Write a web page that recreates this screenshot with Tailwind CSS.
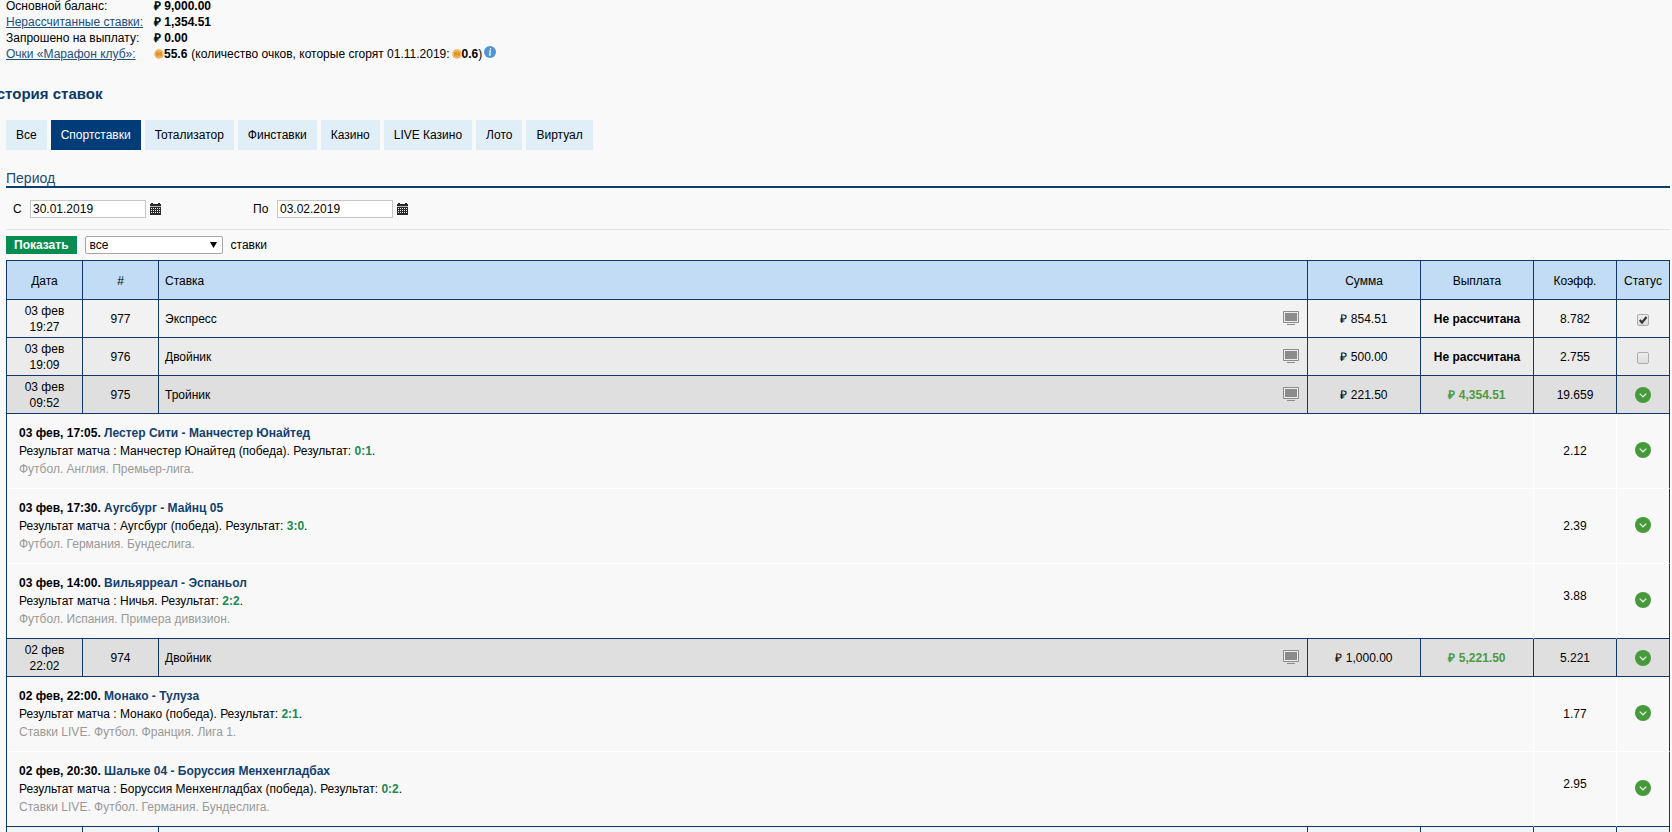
<!DOCTYPE html>
<html lang="ru">
<head>
<meta charset="utf-8">
<title>История ставок</title>
<script src="https://cdn.jsdelivr.net/npm/@tailwindcss/browser@4"></script>
</head>
<body class="bg-[#f9f9f9] font-['Liberation_Sans',Arial,sans-serif] text-[12px] leading-4 text-black">
<svg class="hidden" aria-hidden="true">
  <symbol id="monitor" viewBox="0 0 16 14"><path d="M.5.5h15v11H.5z" fill="#ededed" stroke="#8b8b8b"/><path d="M2 2h12v8H2zM4 13h8v1H4z" fill="#8b8b8b"/></symbol>
  <symbol id="won" viewBox="0 0 16 16"><circle cx="8" cy="8" r="8" fill="#479a3b"/><path d="M4.700 6.600l3.300 3.200 3.300-3.200" fill="none" stroke="#e8f6e4" stroke-width="1.200"/></symbol>
  <symbol id="calendar" viewBox="0 0 11 12"><path d="M0 1h1V0h2v1h5V0h2v1h1v2H0zM0 4h11v8H0z" fill="#2b2b2b"/><path d="M0 3.500h11" stroke="#bdbdbd"/><path d="M1 5.500h9M1 7.500h9M1 9.500h9" stroke="#f0f0f0" stroke-dasharray="1 1"/></symbol>
  <symbol id="coin" viewBox="0 0 10 10"><circle cx="5" cy="5" r="4.700" fill="#eba53a"/><circle cx="5" cy="5" r="3.700" fill="none" stroke="#f6d196" stroke-width=".6"/><path d="M3 6.800V3.600l2 2 2-2v3.200" fill="none" stroke="#c98122" stroke-width=".9"/></symbol>
</svg>
<main class="pl-1.5 pr-0.5">
  <dl class="-mt-0.5 grid grid-cols-[148px_1fr]">
    <dt>Основной баланс:</dt><dd class="font-bold">₽ 9,000.00</dd>
    <dt><a href="#" class="text-[#1c4f7c] underline">Нерассчитанные ставки:</a></dt><dd class="font-bold">₽ 1,354.51</dd>
    <dt>Запрошено на выплату:</dt><dd class="font-bold">₽ 0.00</dd>
    <dt><a href="#" class="text-[#1c4f7c] underline">Очки «Марафон клуб»:</a></dt>
    <dd class="flex items-center"><svg class="size-2.5"><use href="#coin"/></svg><b>55.6</b><span class="ml-1">(количество очков, которые сгорят 01.11.2019:</span><svg class="ml-0.5 size-2.5"><use href="#coin"/></svg><b>0.6</b>)<button aria-label="Информация" class="ml-0.5 pb-1"><svg class="block size-3" viewBox="0 0 12 12"><circle cx="6" cy="6" r="6" fill="#5295d5"/><path d="M6.600 2.200l-.2 1.400M5 5h1.300L5.600 9h1.300" fill="none" stroke="#fff" stroke-width="1.200"/></svg></button></dd>
  </dl>

  <h1 class="-ml-5 mt-[22px] text-[15px] leading-5 font-bold text-[#0d3a68]">История ставок</h1>

  <nav class="mt-4 flex gap-1">
    <button class="h-[30px] bg-[#e0eef8] px-2.5">Все</button>
    <button class="h-[30px] bg-[#003d78] px-2.5 text-white">Спортставки</button>
    <button class="h-[30px] bg-[#e0eef8] px-2.5">Тотализатор</button>
    <button class="h-[30px] bg-[#e0eef8] px-2.5">Финставки</button>
    <button class="h-[30px] bg-[#e0eef8] px-2.5">Казино</button>
    <button class="h-[30px] bg-[#e0eef8] px-2.5">LIVE Казино</button>
    <button class="h-[30px] bg-[#e0eef8] px-2.5">Лото</button>
    <button class="h-[30px] bg-[#e0eef8] px-2.5">Виртуал</button>
  </nav>

  <h2 class="mt-5 border-b-2 border-[#0c3d6b] text-[14px] leading-4 text-[#1c4a78]">Период</h2>
  <form>
    <div class="flex items-center border-b border-[#e4e4e4] pt-3 pb-[11px] pl-[7px]">
      <label for="from" class="w-[17px]">С</label>
      <input id="from" value="30.01.2019" class="h-[18px] w-[116px] border border-[#c6c6c6] bg-white px-0.5">
      <button type="button" aria-label="Выбрать дату начала" class="ml-1"><svg class="block h-3 w-[11px]"><use href="#calendar"/></svg></button>
      <label for="to" class="ml-[92px] w-6">По</label>
      <input id="to" value="03.02.2019" class="h-[18px] w-[116px] border border-[#c6c6c6] bg-white px-0.5">
      <button type="button" aria-label="Выбрать дату окончания" class="ml-1"><svg class="block h-3 w-[11px]"><use href="#calendar"/></svg></button>
    </div>
    <div class="flex items-center py-1.5">
      <button type="button" class="h-[18px] bg-[#078d50] px-2 font-bold text-white">Показать</button>
      <div class="relative ml-2">
        <select id="kind" class="block h-[18px] w-[138px] appearance-none rounded-xs border border-[#a6a6a6] bg-white px-1 leading-4"><option>все</option></select>
        <svg class="pointer-events-none absolute top-1.5 right-1.5 h-1.5 w-[7px]" viewBox="0 0 7 6"><path d="M0 0h7L3.500 6z"/></svg>
      </div>
      <label for="kind" class="ml-2">ставки</label>
    </div>
  </form>

  <table class="w-full table-fixed border-separate border-spacing-0 border-t border-l border-[#12386a] text-center [&_th]:border-r [&_th]:border-b [&_th]:border-[#12386a] [&_th]:px-0 [&_th]:pt-0.5 [&_th]:pb-0 [&_th]:font-normal [&_td]:border-r [&_td]:border-b [&_td]:p-0 [&_svg]:inline-block [&_svg]:align-middle">
    <colgroup><col class="w-[76px]"><col class="w-[76px]"><col><col class="w-[113px]"><col class="w-[113px]"><col class="w-[83px]"><col class="w-[53px]"></colgroup>
    <thead>
      <tr class="h-[39px] bg-[#c1dcf4]"><th>Дата</th><th>#</th><th><div class="pl-1.5 text-left">Ставка</div></th><th>Сумма</th><th>Выплата</th><th>Коэфф.</th><th>Статус</th></tr>
    </thead>
    <tbody>
      <tr class="h-[38px] bg-[#f2f2f2] [&>td]:border-[#12386a] [&>td]:pt-px!">
        <td>03 фев<br>19:27</td><td>977</td><td><div class="flex justify-between pr-2 pl-1.5">Экспресс<svg class="h-3.5 w-4"><use href="#monitor"/></svg></div></td><td>₽ 854.51</td><td class="font-bold">Не рассчитана</td><td>8.782</td>
        <td><span class="relative inline-block size-3 align-middle"><input type="checkbox" checked aria-label="Ставка 977" class="peer block size-3 appearance-none rounded-xs border border-[#adadad] bg-linear-to-b from-[#eeeeee] to-[#dddddd]"><svg class="pointer-events-none absolute inset-0 hidden size-3 peer-checked:block" viewBox="0 0 12 12"><path d="M2.800 6l2.200 2.600L9.500 3" fill="none" stroke="#333" stroke-width="2.200"/></svg></span></td>
      </tr>
      <tr class="h-[38px] bg-[#ebebeb] [&>td]:border-[#12386a] [&>td]:pt-px!">
        <td>03 фев<br>19:09</td><td>976</td><td><div class="flex justify-between pr-2 pl-1.5">Двойник<svg class="h-3.5 w-4"><use href="#monitor"/></svg></div></td><td>₽ 500.00</td><td class="font-bold">Не рассчитана</td><td>2.755</td>
        <td><input type="checkbox" aria-label="Ставка 976" class="inline-block size-3 appearance-none rounded-xs border border-[#adadad] bg-linear-to-b from-[#eeeeee] to-[#dddddd] align-middle"></td>
      </tr>
      <tr class="h-[38px] bg-[#dfdfdf] [&>td]:border-[#12386a] [&>td]:pt-px!">
        <td>03 фев<br>09:52</td><td>975</td><td><div class="flex justify-between pr-2 pl-1.5">Тройник<svg class="h-3.5 w-4"><use href="#monitor"/></svg></div></td><td>₽ 221.50</td><td class="font-bold text-[#4d9a3f]">₽ 4,354.51</td><td>19.659</td><td><svg class="size-4"><use href="#won"/></svg></td>
      </tr>
      <tr class="h-[75px] bg-[#f8f8f8] [&>td]:border-white">
        <td colspan="5"><div class="pl-3 text-left leading-[18px]"><b>03 фев, 17:05. <span class="text-[#12406f]">Лестер Сити - Манчестер Юнайтед</span></b><p>Результат матча : Манчестер Юнайтед (победа). Результат: <b class="text-[#1c8a50]">0:1</b>.</p><p class="text-[#999999]">Футбол. Англия. Премьер-лига.</p></div></td>
        <td>2.12</td><td class="border-r-[#12386a]! pb-0.5!"><svg class="size-4"><use href="#won"/></svg></td>
      </tr>
      <tr class="h-[75px] bg-[#f8f8f8] [&>td]:border-white">
        <td colspan="5"><div class="pl-3 text-left leading-[18px]"><b>03 фев, 17:30. <span class="text-[#12406f]">Аугсбург - Майнц 05</span></b><p>Результат матча : Аугсбург (победа). Результат: <b class="text-[#1c8a50]">3:0</b>.</p><p class="text-[#999999]">Футбол. Германия. Бундеслига.</p></div></td>
        <td>2.39</td><td class="border-r-[#12386a]! pb-0.5!"><svg class="size-4"><use href="#won"/></svg></td>
      </tr>
      <tr class="h-[75px] bg-[#f8f8f8] [&>td]:border-r-white [&>td]:border-b-[#12386a]">
        <td colspan="5"><div class="pl-3 text-left leading-[18px]"><b>03 фев, 14:00. <span class="text-[#12406f]">Вильярреал - Эспаньол</span></b><p>Результат матча : Ничья. Результат: <b class="text-[#1c8a50]">2:2</b>.</p><p class="text-[#999999]">Футбол. Испания. Примера дивизион.</p></div></td>
        <td><div class="pb-2.5">3.88</div></td><td class="border-r-[#12386a]! pb-0.5!"><svg class="size-4"><use href="#won"/></svg></td>
      </tr>
      <tr class="h-[38px] bg-[#dfdfdf] [&>td]:border-[#12386a] [&>td]:pt-px!">
        <td>02 фев<br>22:02</td><td>974</td><td><div class="flex justify-between pr-2 pl-1.5">Двойник<svg class="h-3.5 w-4"><use href="#monitor"/></svg></div></td><td>₽ 1,000.00</td><td class="font-bold text-[#4d9a3f]">₽ 5,221.50</td><td>5.221</td><td><svg class="size-4"><use href="#won"/></svg></td>
      </tr>
      <tr class="h-[75px] bg-[#f8f8f8] [&>td]:border-white">
        <td colspan="5"><div class="pl-3 text-left leading-[18px]"><b>02 фев, 22:00. <span class="text-[#12406f]">Монако - Тулуза</span></b><p>Результат матча : Монако (победа). Результат: <b class="text-[#1c8a50]">2:1</b>.</p><p class="text-[#999999]">Ставки LIVE. Футбол. Франция. Лига 1.</p></div></td>
        <td>1.77</td><td class="border-r-[#12386a]! pb-0.5!"><svg class="size-4"><use href="#won"/></svg></td>
      </tr>
      <tr class="h-[75px] bg-[#f8f8f8] [&>td]:border-r-white [&>td]:border-b-[#12386a]">
        <td colspan="5"><div class="pl-3 text-left leading-[18px]"><b>02 фев, 20:30. <span class="text-[#12406f]">Шальке 04 - Боруссия Менхенгладбах</span></b><p>Результат матча : Боруссия Менхенгладбах (победа). Результат: <b class="text-[#1c8a50]">0:2</b>.</p><p class="text-[#999999]">Ставки LIVE. Футбол. Германия. Бундеслига.</p></div></td>
        <td><div class="pb-2.5">2.95</div></td><td class="border-r-[#12386a]! pb-0.5!"><svg class="size-4"><use href="#won"/></svg></td>
      </tr>
      <tr class="h-[5px] bg-[#f1f4f6] [&>td]:border-[#12386a] [&>td]:border-b-0"><td></td><td></td><td></td><td></td><td></td><td></td><td></td></tr>
    </tbody>
  </table>
</main>
</body>
</html>
